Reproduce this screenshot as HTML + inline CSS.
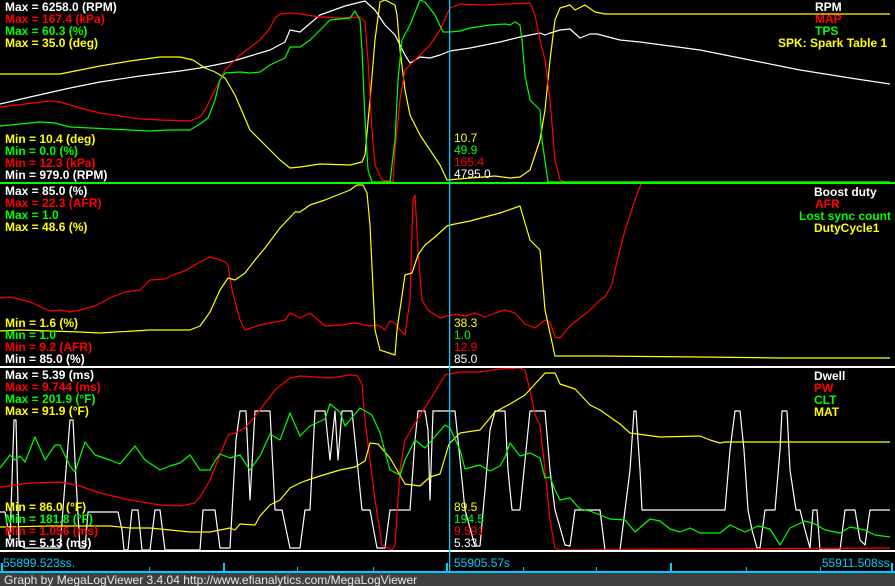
<!DOCTYPE html>
<html><head><meta charset="utf-8"><style>
html,body{margin:0;padding:0;background:#000;width:895px;height:586px;overflow:hidden}
svg{display:block}
text{font-family:"Liberation Sans",sans-serif;font-size:12px}
.b{font-weight:bold}
</style></head><body>
<svg width="895" height="586" xmlns="http://www.w3.org/2000/svg">
<rect width="895" height="586" fill="#000"/>
<g fill="none" stroke-width="1.2" stroke-linejoin="round">
<!-- Panel 1 -->
<polyline stroke="#fff" points="0,104 30,97 70,88 100,82 140,76 180,71 200,68 230,62 250,56 270,50 285,42 290,30 300,32 320,15 345,6 365,1 375,10 385,25 395,35 405,55 410,63 420,57 430,58 440,55 450,51 470,48 500,42 520,37 540,33 545,35 550,33 560,30 570,29 580,38 590,34 597,34 620,40 640,42 700,50 750,60 800,70 850,78 890,84"/>
<polyline stroke="#ff0" points="0,74 60,74 80,70 100,66 130,61 160,57 180,57 193,60 205,68 215,72 225,78 235,95 250,130 265,145 280,160 290,168 300,167 320,164 350,165 362,162 365,155 370,100 375,40 380,2 385,0 395,5 397,15 400,50 405,90 410,115 420,135 430,150 440,165 447,180 495,176 510,178 520,177 530,170 540,140 545,110 548,80 550,60 555,20 560,8 570,5 575,10 585,5 595,12 605,14 890,14"/>
<polyline stroke="#f00" points="0,107 50,101 60,102 80,108 100,113 120,116 140,119 160,120 190,121 200,117 205,110 215,90 225,70 240,55 260,40 270,28 275,18 280,14 290,13 300,14 320,17 340,18 360,17 365,22 368,60 372,130 375,165 382,180 393,182 395,150 400,100 405,70 415,60 430,45 440,30 450,8 460,4 480,5 510,4 530,3 535,15 540,40 545,60 550,100 555,160 560,180 565,182 890,182"/>
<polyline stroke="#0f0" points="0,126 20,124 40,122 55,123 70,127 90,128 130,130 150,131 170,130 190,130 200,124 208,118 215,100 220,80 225,73 240,72 250,73 260,72 270,65 285,58 290,47 300,47 310,40 330,20 350,18 355,11 360,20 362,50 365,120 368,170 372,182 390,182 395,140 398,80 402,40 410,25 420,0 425,2 435,15 443,32 450,32 460,31 470,28 490,25 505,24 510,25 515,22 520,25 522,40 525,75 530,100 535,105 540,110 542,140 548,182 890,182"/>
<!-- Panel 2 -->
<polyline stroke="#f00" points="0,298 10,297 30,302 50,311 60,310 70,312 80,310 95,306 110,298 125,292 140,290 150,280 165,279 175,274 185,271 200,262 210,257 220,260 225,262 228,265 232,290 240,320 245,330 260,325 275,322 285,320 290,313 300,318 310,313 325,326 340,325 355,323 370,326 378,325 385,330 390,321 395,323 400,330 405,335 410,300 413,200 415,195 418,250 422,300 428,310 440,318 455,314 465,316 475,313 485,317 495,313 505,310 515,313 525,324 535,328 545,320 550,322 555,337 560,338 570,326 580,318 590,310 600,300 605,297 612,284 615,270 625,230 635,200 641,184"/>
<polyline stroke="#ff0" points="0,331 20,330 80,332 100,333 150,330 190,330 200,326 210,312 220,290 228,278 235,280 245,273 255,260 265,248 280,228 295,212 300,212 310,205 325,200 340,194 350,190 357,185 363,185 367,193 370,225 375,330 380,350 395,355 397,330 405,275 412,273 418,255 425,245 435,237 447,226 450,225 470,221 500,213 520,206 530,240 540,250 545,310 555,356 600,356 700,357 780,358 890,358"/>
<!-- Panel 3 -->
<polyline stroke="#fff" points="0,512 5,512 10,540 14,420 16,420 19,545 25,548 60,548 66,470 70,420 73,420 76,480 80,548 85,548 88,512 118,512 122,530 124,550 128,550 132,510 138,510 142,550 150,550 155,510 160,510 165,550 200,550 203,510 215,510 220,548 230,548 236,440 240,411 246,411 250,500 255,411 270,411 275,510 282,510 290,548 300,548 305,510 310,510 315,411 325,411 330,460 335,411 338,460 342,411 352,411 358,470 362,510 370,510 377,548 385,548 390,510 410,510 415,440 418,411 425,411 428,430 430,500 433,411 455,411 458,440 462,480 465,510 475,546 480,546 485,490 490,430 495,411 505,411 508,470 512,510 520,510 530,411 545,411 550,470 555,510 565,545 570,546 575,510 600,510 605,550 620,550 625,510 630,470 634,411 636,411 640,470 642,510 725,510 730,450 735,411 740,411 744,450 748,510 752,530 757,548 760,548 765,510 775,510 780,450 782,411 787,411 790,470 796,510 800,510 805,530 810,548 813,510 817,510 820,550 840,550 845,510 855,510 860,540 865,545 870,510 890,510"/>
<polyline stroke="#f00" points="0,487 30,483 60,482 80,486 100,493 130,500 160,505 180,506 195,503 200,497 210,480 220,455 228,435 235,433 245,428 260,410 275,390 290,378 300,376 330,378 350,375 358,376 362,385 365,420 375,500 382,545 392,550 395,545 400,470 405,440 420,415 430,400 445,375 460,372 480,372 500,369 520,368 525,370 530,390 535,415 540,425 545,470 550,520 555,548 560,550 890,548"/>
<polyline stroke="#ff0" points="0,527 50,526 110,526 130,528 150,528 170,530 190,532 210,532 230,528 235,530 240,524 255,525 260,516 270,505 280,500 290,488 300,483 305,481 320,476 340,470 355,467 365,461 370,443 378,444 390,458 405,484 420,486 430,477 440,474 449,444 460,433 480,430 495,412 510,404 525,395 545,373 555,373 560,384 575,389 590,405 600,410 620,424 630,433 645,435 660,437 700,436 710,440 720,443 725,442 890,442"/>
<polyline stroke="#0f0" points="0,468 10,455 15,460 20,456 25,462 35,437 45,460 55,445 60,445 70,466 75,472 85,442 95,455 110,460 120,464 135,446 145,460 160,470 170,466 180,463 190,455 200,470 210,470 215,461 220,454 230,458 240,455 250,470 260,456 270,434 280,440 290,413 300,436 310,426 325,419 330,404 340,412 345,426 360,408 372,415 380,433 390,470 400,475 405,460 415,440 425,448 445,425 450,428 460,450 465,469 480,465 490,471 500,466 505,457 510,443 520,456 530,453 540,458 545,478 550,477 555,490 560,500 570,498 580,509 590,511 610,519 625,520 635,532 650,519 660,521 670,529 680,532 690,528 700,533 720,533 730,525 745,532 758,526 770,529 780,545 790,528 805,521 815,524 825,530 840,533 850,527 865,530 875,535 890,537"/>
</g>
<!-- separators -->
<rect x="0" y="182" width="895" height="2" fill="#0f0"/>
<rect x="0" y="366" width="895" height="2" fill="#fff"/>
<rect x="0" y="550" width="895" height="2" fill="#fff"/>
<!-- axis band -->
<rect x="0" y="552" width="895" height="21" fill="#000"/>
<rect x="0" y="571" width="895" height="2" fill="#0cf"/>
<g fill="#0cf">
<rect x="1" y="563" width="2" height="9"/>
<rect x="149" y="567" width="1" height="5"/><rect x="223" y="563" width="2" height="9"/>
<rect x="297" y="567" width="1" height="5"/><rect x="373" y="567" width="1" height="5"/>
<rect x="446" y="563" width="2" height="9"/><rect x="523" y="567" width="1" height="5"/>
<rect x="596" y="567" width="1" height="5"/><rect x="670" y="563" width="2" height="9"/>
<rect x="746" y="567" width="1" height="5"/><rect x="820" y="567" width="1" height="5"/>
<rect x="891" y="563" width="2" height="9"/>
</g>
<g fill="#0cf"><text x="3" y="567">55899.523ss.</text><text x="454" y="567">55905.57s</text><text x="893" y="567" text-anchor="end">55911.508ss.</text></g>
<rect x="449" y="0" width="1.3" height="573" fill="#0cf"/>
<rect x="0" y="573" width="895" height="13" fill="#404040"/>
<text x="4" y="584" fill="#e8e8e8">Graph by MegaLogViewer 3.4.04 http://www.efianalytics.com/MegaLogViewer</text>
<!-- Panel 1 labels -->
<g class="b">
<text x="5" y="11" fill="#fff" class="b">Max = 6258.0 (RPM)</text>
<text x="5" y="23" fill="#f00" class="b">Max = 167.4 (kPa)</text>
<text x="5" y="35" fill="#0f0" class="b">Max = 60.3 (%)</text>
<text x="5" y="47" fill="#ff0" class="b">Max = 35.0 (deg)</text>
<text x="5" y="143" fill="#ff0" class="b">Min = 10.4 (deg)</text>
<text x="5" y="155" fill="#0f0" class="b">Min = 0.0 (%)</text>
<text x="5" y="167" fill="#f00" class="b">Min = 12.3 (kPa)</text>
<text x="5" y="179" fill="#fff" class="b">Min = 979.0 (RPM)</text>
<text x="815" y="11" fill="#fff" class="b">RPM</text>
<text x="815" y="23" fill="#f00" class="b">MAP</text>
<text x="815" y="35" fill="#0f0" class="b">TPS</text>
<text x="778" y="47" fill="#ff0" class="b">SPK: Spark Table 1</text>
<text x="5" y="195" fill="#fff" class="b">Max = 85.0 (%)</text>
<text x="5" y="207" fill="#f00" class="b">Max = 22.3 (AFR)</text>
<text x="5" y="219" fill="#0f0" class="b">Max = 1.0</text>
<text x="5" y="231" fill="#ff0" class="b">Max = 48.6 (%)</text>
<text x="5" y="327" fill="#ff0" class="b">Min = 1.6 (%)</text>
<text x="5" y="339" fill="#0f0" class="b">Min = 1.0</text>
<text x="5" y="351" fill="#f00" class="b">Min = 9.2 (AFR)</text>
<text x="5" y="363" fill="#fff" class="b">Min = 85.0 (%)</text>
<text x="814" y="196" fill="#fff" class="b">Boost duty</text>
<text x="815" y="208" fill="#f00" class="b">AFR</text>
<text x="799" y="220" fill="#0f0" class="b">Lost sync count</text>
<text x="814" y="232" fill="#ff0" class="b">DutyCycle1</text>
<text x="5" y="379" fill="#fff" class="b">Max = 5.39 (ms)</text>
<text x="5" y="391" fill="#f00" class="b">Max = 9.744 (ms)</text>
<text x="5" y="403" fill="#0f0" class="b">Max = 201.9 (°F)</text>
<text x="5" y="415" fill="#ff0" class="b">Max = 91.9 (°F)</text>
<text x="5" y="511" fill="#ff0" class="b">Min = 86.0 (°F)</text>
<text x="5" y="523" fill="#0f0" class="b">Min = 181.8 (°F)</text>
<text x="5" y="535" fill="#f00" class="b">Min = 1.056 (ms)</text>
<text x="5" y="547" fill="#fff" class="b">Min = 5.13 (ms)</text>
<text x="814" y="380" fill="#fff" class="b">Dwell</text>
<text x="814" y="392" fill="#f00" class="b">PW</text>
<text x="814" y="404" fill="#0f0" class="b">CLT</text>
<text x="814" y="416" fill="#ff0" class="b">MAT</text>
</g>
<!-- cursor values -->
<text x="454" y="142" fill="#ff0">10.7</text>
<text x="454" y="154" fill="#0f0">49.9</text>
<text x="454" y="166" fill="#f00">165.4</text>
<text x="454" y="178" fill="#fff">4795.0</text>
<text x="454" y="327" fill="#ff0">38.3</text>
<text x="454" y="339" fill="#0f0">1.0</text>
<text x="454" y="351" fill="#f00">12.9</text>
<text x="454" y="363" fill="#fff">85.0</text>
<text x="454" y="511" fill="#ff0">89.5</text>
<text x="454" y="523" fill="#0f0">194.5</text>
<text x="454" y="535" fill="#f00">9.591</text>
<text x="454" y="547" fill="#fff">5.33</text>
</svg>
</body></html>
